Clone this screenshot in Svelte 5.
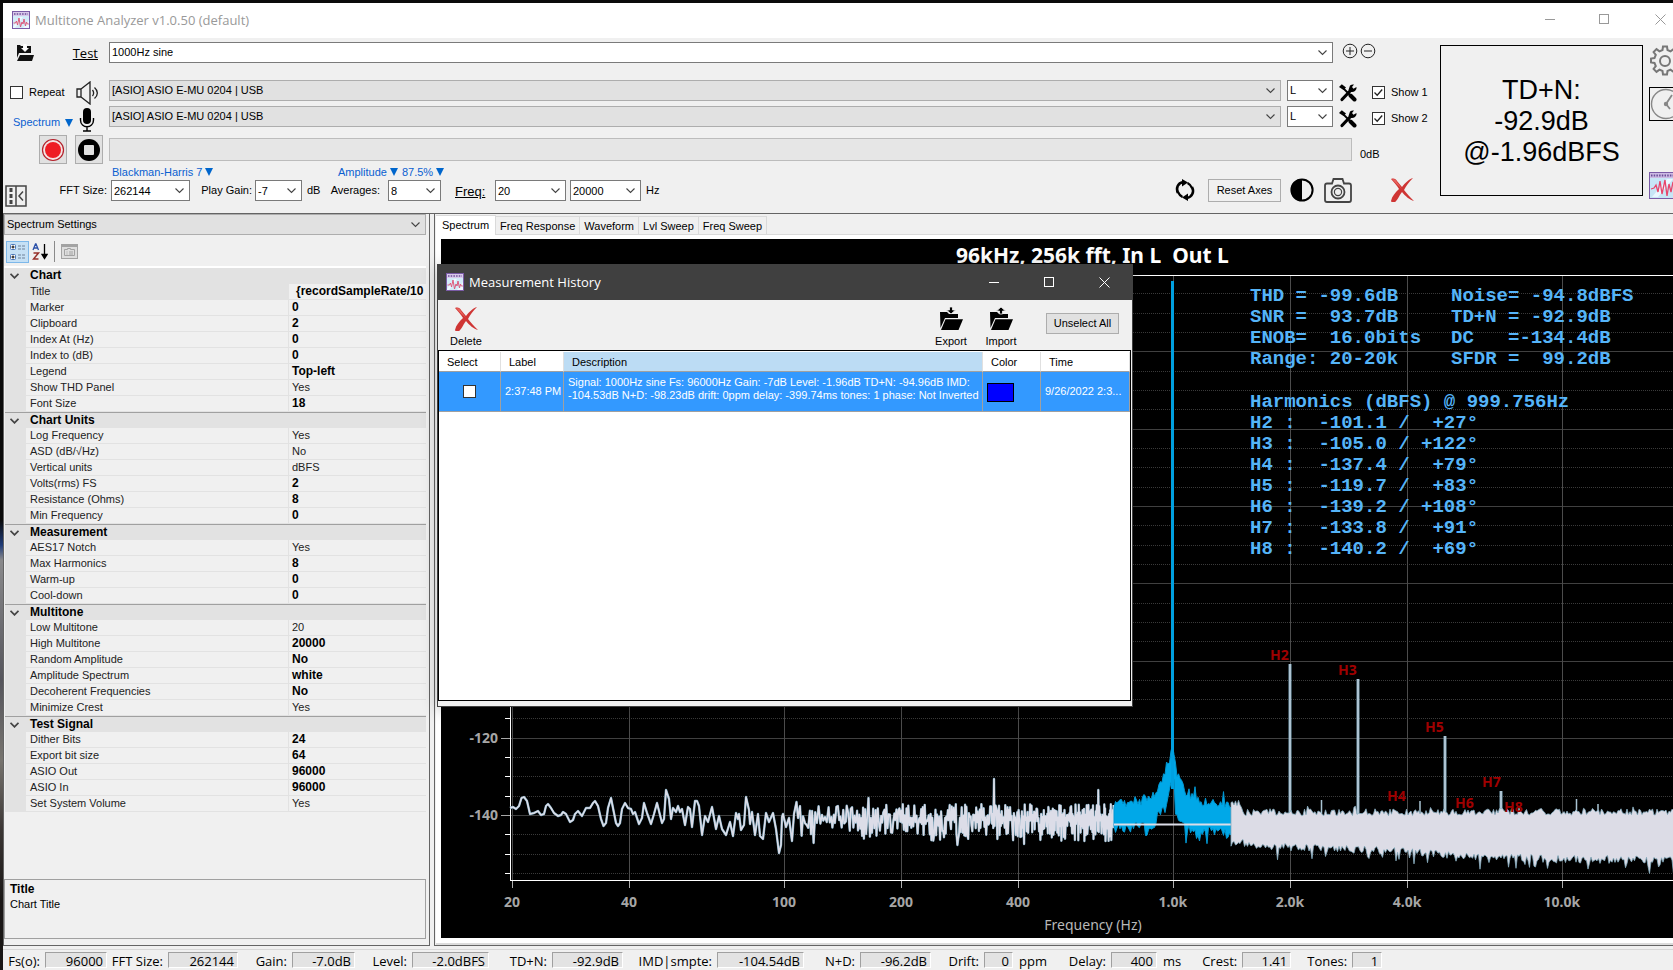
<script>
  const groups = [
    { name: 'Chart', rows: [['Title', '{recordSampleRate/10', 1], ['Marker', '0', 1], ['Clipboard', '2', 1], ['Index At (Hz)', '0', 1], ['Index to (dB)', '0', 1], ['Legend', 'Top-left', 1], ['Show THD Panel', 'Yes', 0], ['Font Size', '18', 1]] },
    { name: 'Chart Units', rows: [['Log Frequency', 'Yes', 0], ['ASD (dB/√Hz)', 'No', 0], ['Vertical units', 'dBFS', 0], ['Volts(rms) FS', '2', 1], ['Resistance (Ohms)', '8', 1], ['Min Frequency', '0', 1]] },
    { name: 'Measurement', rows: [['AES17 Notch', 'Yes', 0], ['Max Harmonics', '8', 1], ['Warm-up', '0', 1], ['Cool-down', '0', 1]] },
    { name: 'Multitone', rows: [['Low Multitone', '20', 0], ['High Multitone', '20000', 1], ['Random Amplitude', 'No', 1], ['Amplitude Spectrum', 'white', 1], ['Decoherent Frequencies', 'No', 1], ['Minimize Crest', 'Yes', 0]] },
    { name: 'Test Signal', rows: [['Dither Bits', '24', 1], ['Export bit size', '64', 1], ['ASIO Out', '96000', 1], ['ASIO In', '96000', 1], ['Set System Volume', 'Yes', 0]] }
  ];
  const tabs = ['Spectrum', 'Freq Response', 'Waveform', 'Lvl Sweep', 'Freq Sweep'];
  let activeTab = $state('Spectrum');

  // label, value, unit, width of the label cell, width of the value box
  const meters = [
    ['Fs(o):', '96000', '', 42, 62], ['FFT Size:', '262144', '', 61, 70], ['Gain:', '-7.0dB', '', 54, 63],
    ['Level:', '-2.0dBFS', '', 57, 77], ['TD+N:', '-92.9dB', '', 63, 71], ['IMD|smpte:', '-104.54dB', '', 94, 87],
    ['N+D:', '-96.2dB', '', 56, 71], ['Drift:', '0', 'ppm', 53, 29], ['Delay:', '400', 'ms', 64, 46],
    ['Crest:', '1.41', '', 61, 49], ['Tones:', '1', '', 61, 30]
  ];

  const summary = [
    ['THD = -99.6dB', 'Noise= -94.8dBFS'],
    ['SNR =  93.7dB', 'TD+N = -92.9dB'],
    ['ENOB=  16.0bits', 'DC   =-134.4dB'],
    ['Range: 20-20k', 'SFDR =  99.2dB']
  ];
  const harmonicList = [
    'Harmonics (dBFS) @ 999.756Hz',
    'H2 :  -101.1 /  +27°',
    'H3 :  -105.0 / +122°',
    'H4 :  -137.4 /  +79°',
    'H5 :  -119.7 /  +83°',
    'H6 :  -139.2 / +108°',
    'H7 :  -133.8 /  +91°',
    'H8 :  -140.2 /  +69°'
  ];

  // Chart scales: log frequency across, dBFS down.
  const fx = (f) => 71 + 389 * Math.log10(f / 20);
  const dy = (db) => 35 - db * 3.865;
  const freqTicks = [[20, '20'], [40, '40'], [100, '100'], [200, '200'], [400, '400'], [1000, '1.0k'], [2000, '2.0k'], [4000, '4.0k'], [10000, '10.0k']];
  const dbLines = [];
  for (let db = -5; db >= -155; db -= 5) dbLines.push(db);

  const harmonics = [
    ['H2', 829, 421, 849, 425], ['H3', 897, 436, 917, 440], ['H5', 984, 493, 1004, 497], ['H7', 1041, 548, 1060, 552]
  ];
  const smallHarmonics = [['H4', 946, 562], ['H6', 1014, 569], ['H8', 1063, 573]];

  let seed = 20220926;
  function rnd() {
    seed = (seed * 1664525 + 1013904223) % 4294967296;
    return seed / 4294967296;
  }

  const low = [[69, 569], [72, 568], [75, 570], [78, 567], [80.5, 559], [83, 558], [86, 562], [89, 575], [93, 574], [97, 572], [100, 576], [103, 575], [105, 567], [107, 565], [110, 569], [113, 574], [117, 577], [120, 576], [122, 573], [125, 575], [129, 583], [132, 581], [134, 575], [137, 572], [141, 577], [145, 569], [149, 569], [152, 564], [154, 562], [157, 567], [160, 580], [162.5, 587], [165, 584], [167, 569], [170, 559], [172, 569], [175, 584], [177, 587], [179, 584], [181, 570], [184, 564], [187, 569], [190, 570], [192, 575], [194, 573], [198, 585], [201, 579], [203, 564], [206, 574], [210, 585], [213, 575], [216, 564], [218, 572], [221, 584], [223, 580], [225, 551], [228, 560], [230, 580], [232, 569], [235, 573], [237, 567], [239, 573], [241, 570], [244, 586], [247, 568], [249, 570], [251, 588], [254, 562], [256, 562], [258, 567], [261, 596], [264, 577], [267, 583], [271, 568], [275, 590], [278, 577], [281, 590], [285, 596], [289, 583], [292, 597], [295, 574], [297, 580], [298, 575], [300, 591], [303, 586], [305, 558], [308, 571], [309, 585], [311, 573], [314, 596], [317, 575], [319, 597], [322, 600], [325, 574], [328, 583], [332, 574], [335, 590], [338, 614], [340, 606], [341, 578], [342, 575], [345, 588], [348, 579], [351, 602], [353, 575], [355.5, 563], [357, 579]];

  function midTrace() {
    const pts = [];
    const peaks = [[373, 604], [428, 559], [554, 540], [658, 551], [517, 606], [584, 605]];
    let x = 359, up = true;
    while (x < 673) {
      const t = (x - 359) / 314;
      const reach = up ? 14 : 20 + 2 * t;
      let y = 580 + (up ? -1 : 1) * (1 + Math.pow(rnd(), 1.6 - 0.4 * t) * reach);
      const i = peaks.findIndex((p) => Math.abs(p[0] - x) < 1);
      if (i >= 0) y = peaks.splice(i, 1)[0][1];
      pts.push([x, y]);
      x += (1.9 - 1.4 * Math.sqrt(t)) * (0.6 + 0.6 * rnd());
      if (rnd() < 0.84) up = !up;
    }
    return pts;
  }

  const toPath = (pts) => 'M' + pts.map((p) => p[0].toFixed(1) + ' ' + p[1].toFixed(1)).join('L');

  function lerp(table, x) {
    for (let i = 1; i < table.length; i++) {
      const [x0, y0] = table[i - 1];
      const [x1, y1] = table[i];
      if (x <= x1) return y0 + ((y1 - y0) * (x - x0)) / (x1 - x0);
    }
    return table[table.length - 1][1];
  }

  // Filled noise band between two jagged edges.
  function band(x0, x1, top, bottom, ja, jb) {
    const a = [];
    const b = [];
    for (let x = x0; x <= x1; x += 1.5) {
      const sa = rnd() < 0.08 ? ja : 0;
      const sb = rnd() < 0.14 ? jb : 0;
      a.push([x, lerp(top, x) - rnd() * ja - sa * rnd()]);
      b.push([x, lerp(bottom, x) + rnd() * jb + sb * rnd() * 1.6]);
    }
    return toPath(a.concat(b.reverse())) + 'Z';
  }

  const noiseTop = [[790, 567], [798, 568], [803, 577], [1231, 576], [2400, 576]];
  const noiseBottom = [[790, 598], [830, 604], [950, 608], [1010, 612], [1110, 616], [1231, 617], [2400, 620]];
  const whiteLow = toPath(low.concat(midTrace()));
  const whiteHigh = band(790, 2400, noiseTop, noiseBottom, 7, 8);
  const tone = band(673, 790,
    [[673, 571], [700, 567], [713, 560], [720, 551], [724, 538], [729, 526], [731, 506], [733, 522], [736, 538], [740, 548], [745, 558], [760, 567], [790, 572]],
    [[673, 585], [712, 582], [717, 572], [726, 563], [729, 540], [733, 540], [736, 564], [742, 578], [750, 586], [790, 590]], 10, 10);
</script>

{#snippet appIcon(size)}
  <svg width={size} height={size} viewBox="0 0 18 18" aria-hidden="true">
    <rect x=".5" y=".5" width="17" height="17" fill="#d3ecf8" stroke="#7a5ba6" />
    <rect x="1" y="1" width="16" height="4" fill="#d9c9ea" />
    <path d="M2 3h14" stroke="#6b4f97" stroke-width="1.4" stroke-dasharray="1.5 1.2" />
    <path d="M11 17l6-8v8zM1 16l7-10h3l-8 11H1z" fill="#eff9ff" />
    <path d="M1.500 12h2l1-2 1 4 1.500-7 1.500 9 1.500-5 1 2 1-5 1.500 7 1-4 .8 2h1.500" fill="none" stroke="#dc5a7c" />
  </svg>
{/snippet}

{#snippet redX()}
  <svg width="24" height="24" viewBox="0 0 24 24" aria-hidden="true">
    <path d="M1 1c3-1 5 0 6 2l5 6c3-4 7-8 11-9-4 4-7 8-9 12 3 4 6 7 10 11-4-1-9-5-12-9-3 4-5 9-7 10-2 1-4 0-4-1 1-5 4-8 8-12C7 8 4 4 1 1z" fill="#cf3534" />
    <path d="M2 1c3 0 4 1 5 3l5 7c-3-3-7-6-10-10z" fill="#e8645e" />
  </svg>
{/snippet}

{#snippet tools()}
  <svg width="18" height="18" viewBox="0 0 18 18" aria-hidden="true">
    <path d="M3 15.500L12 6" stroke="#000" stroke-width="3.200" stroke-linecap="round" />
    <path d="M11 1.500q2-1.500 4-1l-2 2.500 1.500 1.800 3-1.800q.5 2.500-1.500 4t-4.500.8L9.500 6z" />
    <path d="M4.500 4.500l7 7" fill="none" stroke="#000" stroke-width="1.800" />
    <path d="M0 3L2.800.3 7 3.500 4.500 6z" />
    <path d="M11.500 11.500l4 4" stroke="#000" stroke-width="4" stroke-linecap="round" />
  </svg>
{/snippet}

{#snippet folder(dir)}
  <svg width="24" height="24" viewBox="0 0 24 24" aria-hidden="true">
    <path d="M1 5h7l2 2h9v4H6L1.500 21z" />
    <path d="M6.500 12.300H24L19.500 23H2z" />
    {#if dir === 'out'}<path d="M10.500 0h3v3h3L12 7 7.500 3h3z" stroke="#f0f0f0" stroke-width=".8" />
    {:else}<path d="M10.500 7h3V4h3L12 0 7.500 4h3z" stroke="#f0f0f0" stroke-width=".8" />{/if}
  </svg>
{/snippet}

{#snippet captionButtons()}
  <button aria-label="Minimize"><svg width="11" height="11"><path d="M0 5.500h10" stroke="currentColor" /></svg></button>
  <button aria-label="Maximize"><svg width="11" height="11"><rect x=".5" y=".5" width="9" height="9" fill="none" stroke="currentColor" /></svg></button>
  <button class="close" aria-label="Close"><svg width="11" height="11"><path d="M.5 .5l10 10M10.500 .5l-10 10" stroke="currentColor" /></svg></button>
{/snippet}

<div class="desktop">
  <div class="window">
    <header class="caption">
      {@render appIcon(18)}
      <h1>Multitone Analyzer v1.0.50 (default)</h1>
      <div class="buttons">{@render captionButtons()}</div>
    </header>

    <section class="controls">
      <div class="rows">
        <div class="row first">
          <div class="lead">
            <button class="icon" aria-label="Load test">
              <svg width="18" height="18" viewBox="0 0 18 18" fill="#111"><path d="M1 1h3l1 1h2v2H5l4 4 4-4h-2V2h4v7H3L1 14z" /><path d="M7.500 0h3v4H12L9 7 6 4h1.500z" fill="#fff" /><path d="M4 11h14l-2 6H1z" /></svg>
            </button>
            <a class="test" href="#test">Test</a>
          </div>
          <select class="grow" aria-label="Test"><option>1000Hz sine</option></select>
          <div class="tail pm">
            <button class="icon" aria-label="Add"><svg width="16" height="16" viewBox="0 0 16 16" fill="none" stroke="#222"><circle cx="8" cy="8" r="6.800" /><path d="M4 8h8M8 4v8" /></svg></button>
            <button class="icon" aria-label="Remove"><svg width="16" height="16" viewBox="0 0 16 16" fill="none" stroke="#222"><circle cx="8" cy="8" r="6.800" /><path d="M4 8h8" /></svg></button>
          </div>
        </div>

        <div class="row second">
          <div class="lead">
            <label><input type="checkbox" />Repeat</label>
            <svg class="spk" width="24" height="24" viewBox="0 0 24 24" fill="none" stroke="#222" stroke-width="1.300"><path d="M1 8h4v8H1zM5 8l9-7v22l-9-7" /><path d="M16.500 9c1.500 2 1.500 4 0 6M18.500 6.500c3.800 3.500 3.800 7.500 0 11" /></svg>
          </div>
          <select class="grow gray" aria-label="Output device"><option>[ASIO] ASIO E-MU 0204 | USB</option></select>
          <select class="chan" aria-label="Output channel"><option>L</option></select>
          <div class="tail">
            <button class="icon" aria-label="Output setup">{@render tools()}</button>
            <label><input type="checkbox" checked />Show 1</label>
          </div>
        </div>

        <div class="row third">
          <div class="lead">
            <a class="link low" href="#mode">Spectrum <i></i></a>
            <svg class="mic" width="16" height="24" viewBox="0 0 16 24"><rect x="4" y="0" width="8" height="16" rx="4" /><path d="M1.500 10v2c0 9 13 9 13 0v-2M8 18.500V23M4 23h8" fill="none" stroke="#000" stroke-width="1.400" /></svg>
          </div>
          <select class="grow gray" aria-label="Input device"><option>[ASIO] ASIO E-MU 0204 | USB</option></select>
          <select class="chan" aria-label="Input channel"><option>L</option></select>
          <div class="tail">
            <button class="icon" aria-label="Input setup">{@render tools()}</button>
            <label><input type="checkbox" checked />Show 2</label>
          </div>
        </div>

        <div class="row fourth">
          <div class="lead">
            <button class="push" aria-label="Record"><svg width="24" height="24" viewBox="0 0 24 24"><circle cx="12" cy="12" r="10.500" fill="#f4e4e4" stroke="#b3202a" stroke-width="1.200" /><circle cx="12" cy="12" r="8" fill="#ee1c24" /></svg></button>
            <button class="push" aria-label="Stop"><svg width="24" height="24" viewBox="0 0 24 24"><circle cx="12" cy="12" r="11" /><rect x="7" y="7" width="10" height="10" rx="1" fill="#e1e1e1" /></svg></button>
          </div>
          <div class="level" role="meter" aria-label="Level" aria-valuenow="0"></div>
          <span class="zero">0dB</span>
        </div>

        <div class="row links">
          <a class="link window-fn" href="#window">Blackman-Harris 7<i></i></a>
          <a class="link" href="#amplitude">Amplitude <i></i></a>
          <a class="link" href="#overlap">87.5%<i></i></a>
        </div>

        <div class="row last">
          <button class="icon toggle" aria-label="Collapse panel">
            <svg width="22" height="22" viewBox="0 0 22 22" fill="none" stroke="#444" stroke-width="1.500"><path d="M1 1h20v20H1zM11 1v20M18 6.500L14 11l4 4.500" /><path d="M6 3v16" stroke-width="3" stroke-dasharray="4 2" /></svg>
          </button>
          <label class="c1" for="fft">FFT Size:</label>
          <select id="fft" class="w79"><option>262144</option></select>
          <label class="c2" for="gain">Play Gain:</label>
          <select id="gain" class="w47"><option>-7</option></select>
          <span class="unit">dB</span>
          <label class="c3" for="avg">Averages:</label>
          <select id="avg" class="w53"><option>8</option></select>
          <a class="freq" href="#freq">Freq:</a>
          <select class="w71" aria-label="Lowest frequency"><option>20</option></select>
          <select class="w71 next" aria-label="Highest frequency"><option>20000</option></select>
          <span class="unit">Hz</span>
          <div class="actions">
            <button class="icon" aria-label="Refresh"><svg width="22" height="22" viewBox="0 0 22 22"><path d="M9 3C4 4 1.500 9 4 14M13 19c5-1 7.500-6 5-11" fill="none" stroke="#000" stroke-width="2.600" /><path d="M8 0l6 3.500-6 4zM14 22l-6-3.500 6-4z" /><path d="M4 13q1.500 3.500 4.500 5M18 9q-1.500-3.500-4.500-5" fill="none" stroke="#000" stroke-width="2.200" /></svg></button>
            <button class="push reset">Reset Axes</button>
            <button class="icon" aria-label="Contrast"><svg width="24" height="24" viewBox="0 0 24 24"><circle cx="12" cy="12" r="10.600" fill="#f0f0f0" stroke="#000" stroke-width="2" /><path d="M12 1a11 11 0 0 0 0 22z" /></svg></button>
            <button class="icon cam" aria-label="Snapshot"><svg width="28" height="25" viewBox="0 0 28 25" fill="none" stroke="#444" stroke-width="1.800"><path d="M3 5.500h5L9.500 1h9L20 5.500h5q2 0 2 2V22q0 2-2 2H3q-2 0-2-2V7.500q0-2 2-2z" /><circle cx="14" cy="14" r="6.500" /><circle cx="14" cy="14" r="3.600" stroke-width="1.200" /></svg></button>
            <button class="icon del" aria-label="Clear">{@render redX()}</button>
          </div>
        </div>
      </div>

      <output class="bigread">TD+N:<br />-92.9dB<br />@-1.96dBFS</output>

      <nav class="side">
        <button class="icon" aria-label="Settings"><svg width="32" height="32" viewBox="0 0 32 32" fill="none" stroke="#777" stroke-width="2"><circle cx="16" cy="16" r="5" /><path d="M13.500 5l.5-3.500h4l.5 3.500 3 1.300 3-2.200 2.900 2.900-2.200 3 1.300 3 3.500.5v4l-3.500.5-1.300 3 2.200 3-2.900 2.900-3-2.200-3 1.300-.5 3.500h-4l-.5-3.500-3-1.300-3 2.200-2.900-2.900 2.200-3-1.300-3-3.500-.5v-4l3.500-.5 1.300-3-2.200-3 2.900-2.900 3 2.200z" /></svg></button>
        <button class="icon clock" aria-label="History"><svg width="32" height="32" viewBox="0 0 32 32" fill="none" stroke="#888" stroke-width="1.400"><circle cx="16" cy="16" r="14.500" /><path d="M22 7l-6 9 4 5" stroke-width="1.800" /><circle cx="16" cy="16" r="1.500" fill="#888" /></svg></button>
        <button class="icon wave" aria-label="Generator">
          <svg width="36" height="27" viewBox="0 0 36 27"><rect x=".5" y=".5" width="35" height="26" fill="#c7e6f6" stroke="#7a5ba6" /><rect x="1" y="1" width="34" height="5" fill="#cdbbe4" /><path d="M2 3.500h30" stroke="#6b4f97" stroke-width="2" stroke-dasharray="1.500 1.200" /><path d="M3 25L18 7h6L9 25z" fill="#eaf7ff" /><path d="M2 17l3-1 2-3 2 7 2-11 2 13 3-14 2 16 2-12 2 8 2-10 2 10 2-4 3 1" fill="none" stroke="#e8456b" stroke-width="1.300" /></svg>
        </button>
      </nav>
    </section>

    <main class="work">
      <aside class="props">
        <select class="panel-pick gray" aria-label="Settings page"><option>Spectrum Settings</option></select>
        <div class="ptools">
          <button class="cat" aria-label="Categorized"><svg width="18" height="18" viewBox="0 0 18 18"><path d="M9 3h8M9 6h8M9 12h8M9 15h8" stroke="#6e8199" stroke-dasharray="3 1" /><rect x="1.500" y="1.500" width="5" height="5" rx="1" fill="#fff" stroke="#4a76b8" /><rect x="1.500" y="11.500" width="5" height="5" rx="1" fill="#fff" stroke="#4a76b8" /><path d="M2.500 4h3M4 2.500v3M2.500 14h3M4 12.500v3" stroke="#000" /></svg></button>
          <button class="icon" aria-label="Alphabetical"><svg width="16" height="18" viewBox="0 0 16 18" fill="none"><path d="M1 7l2.500-6h.5L6.500 7M2 5h4" stroke="#2b50a8" stroke-width="1.300" /><path d="M1.500 10h5l-5 6h5" stroke="#96302a" stroke-width="1.500" /><path d="M12.500 1v13M10 11.500l2.500 4 2.500-4z" stroke="#000" stroke-width="1.300" fill="#000" /></svg></button>
          <span class="bar"></span>
          <button class="icon" aria-label="Property pages" disabled><svg width="17" height="15" viewBox="0 0 17 15" fill="none" stroke="#a3a3a3"><rect x=".5" y=".5" width="16" height="14" fill="#dedede" /><path d="M1 2h15" stroke-width="2" /><path d="M3.500 5.500h3v-1h3v1h4v6h-10zM5.500 8h1M8 8h4M5.500 10h1M8 10h4" /></svg></button>
        </div>
        <table class="grid">
          <colgroup><col class="gut" /><col class="nam" /><col /></colgroup>
          {#each groups as g}
            <tbody>
              <tr class="group"><td><button aria-label="Collapse {g.name}"><svg width="9" height="6"><path d="M.5 .8l4 4 4-4" fill="none" stroke="#444" stroke-width="1.800" /></svg></button></td><th colspan="2">{g.name}</th></tr>
              {#each g.rows as [name, value, strong]}
                <tr class:selected={name === 'Title'}><td></td><td>{name}</td><td class:strong={strong === 1}>{value}</td></tr>
              {/each}
            </tbody>
          {/each}
        </table>
        <div class="help"><b>Title</b><p>Chart Title</p></div>
      </aside>

      <section class="view">
        <div class="tabs" role="tablist">
          {#each tabs as t}
            <button role="tab" aria-selected={activeTab === t} class:active={activeTab === t} onclick={() => (activeTab = t)}>{t}</button>
          {/each}
        </div>
        <div class="page">
          <svg class="chart" aria-label="Spectrum chart">
            <text class="title" x="515" y="24" xml:space="preserve">96kHz, 256k fft, In L  Out L</text>
            {#each dbLines as db}
              {#if db % 20 === 0}
                <line x1="60" x2="100%" y1={Math.round(dy(db)) + 0.5} y2={Math.round(dy(db)) + 0.5} stroke="#404040" />
                <line x1="60" x2="69" y1={Math.round(dy(db)) + 0.5} y2={Math.round(dy(db)) + 0.5} stroke="#a8a8a8" />
                <text class="tick end" x="57" y={dy(db) + 5}>{db}</text>
              {:else}
                <line x1="72" x2="100%" y1={Math.round(dy(db)) + 0.5} y2={Math.round(dy(db)) + 0.5} stroke="#3a3a3a" stroke-dasharray="1 1" />
                <line x1="64" x2="69" y1={Math.round(dy(db)) + 0.5} y2={Math.round(dy(db)) + 0.5} stroke="#fff" />
              {/if}
            {/each}
            {#each freqTicks as [f, label]}
              <line x1={Math.round(fx(f)) + 0.5} x2={Math.round(fx(f)) + 0.5} y1="36" y2="641" stroke="#4c4c4c" />
              <line x1={Math.round(fx(f)) + 0.5} x2={Math.round(fx(f)) + 0.5} y1="641" y2="649" stroke="#b0b0b0" />
              <text class="tick mid" x={fx(f)} y="668">{label}</text>
            {/each}
            <path d="M69.500 36.500V641.500M69 36.500H2400M69 641.500H2400" stroke="#fff" fill="none" />
            <path d={whiteLow} fill="none" stroke="#6f9db4" stroke-width="2.400" stroke-linejoin="round" />
            <path d={whiteLow} fill="none" stroke="#dcdde8" stroke-width="1.600" stroke-linejoin="round" />
            <path d={tone} fill="#00a8e8" stroke="#0098d4" />
            <path d="M731.500 42V550" stroke="#00a0e0" stroke-width="3" />
            <path d="M673 585.500H790" stroke="#dcdde8" stroke-width="2" />
            {#each harmonics as [label, lx, ly, x, y]}
              <path d="M{x} {y}V590" stroke="#7fa9bd" stroke-width="3" />
              <path d="M{x} {y}V590" stroke="#dcdde8" stroke-width="1" />
              <text class="harm" x={lx} y={ly}>{label}</text>
            {/each}
            <path d="M880.500 561V590M979 562V590M1135.500 560V590M1157 565V590" stroke="#a9c3d2" stroke-width="1.500" />
            <path d={whiteHigh} fill="#dcdce6" stroke="#86adc0" stroke-width=".8" />
            {#each smallHarmonics as [label, x, y]}<text class="harm" {x} {y}>{label}</text>{/each}
            <text class="axis" x="652" y="691">Frequency (Hz)</text>
            <g class="numbers">
              {#each summary as [left, right], i}
                <text x="809" y={62 + i * 21} xml:space="preserve">{left}</text>
                <text x="1010" y={62 + i * 21} xml:space="preserve">{right}</text>
              {/each}
              {#each harmonicList as line, i}<text x="809" y={168 + i * 21} xml:space="preserve">{line}</text>{/each}
            </g>
          </svg>
        </div>
      </section>

      <section class="dialog" role="dialog" aria-label="Measurement History">
        <header>
          {@render appIcon(18)}
          <h2>Measurement History</h2>
          <div class="buttons">{@render captionButtons()}</div>
        </header>
        <div class="dtools">
          <button class="stack">{@render redX()}<span>Delete</span></button>
          <span class="fill"></span>
          <button class="stack">{@render folder('out')}<span>Export</span></button>
          <button class="stack">{@render folder('in')}<span>Import</span></button>
          <button class="push unsel">Unselect All</button>
        </div>
        <div class="list">
          <table>
            <colgroup><col class="k1" /><col class="k2" /><col /><col class="k4" /><col class="k5" /></colgroup>
            <thead><tr><th>Select</th><th>Label</th><th class="sorted">Description</th><th>Color</th><th>Time</th></tr></thead>
            <tbody>
              <tr>
                <td class="ctr"><input type="checkbox" aria-label="Select measurement" /></td>
                <td class="tight">2:37:48 PM</td>
                <td class="desc">Signal: 1000Hz sine Fs: 96000Hz Gain: -7dB Level: -1.96dB TD+N: -94.96dB IMD:<br />-104.53dB N+D: -98.23dB drift: 0ppm delay: -399.74ms tones: 1 phase: Not Inverted</td>
                <td><span class="swatch"></span></td>
                <td class="tight">9/26/2022 2:3...</td>
              </tr>
            </tbody>
          </table>
        </div>
      </section>
    </main>

    <footer class="status">
      {#each meters as [label, value, unit, lw, bw]}
        <span class="lab" style="width:{lw}px">{label}</span><span class="box" style="width:{bw}px">{value}</span>{#if unit}<span class="after">{unit}</span>{/if}
      {/each}
    </footer>
  </div>
</div>

<style>
  :global(body) { margin: 0; }
  .desktop {
    height: 100vh; overflow: hidden; box-sizing: border-box; padding: 3px 0 0 3px;
    background: linear-gradient(#0a0a0a 0 520px, #1f3b78 545px, #8a8a8c 560px, #55555c 680px, #77746f 760px, #3b3634 830px, #1a1716 900px);
    font: 11px/13px "Liberation Sans", Arial, sans-serif; color: #000;
  }
  .desktop * { box-sizing: border-box; }
  .window { height: 100%; display: flex; flex-direction: column; background: #f0f0f0; overflow: hidden; }
  button { font: inherit; color: inherit; padding: 0; border: 0; background: none; margin: 0; }
  svg { display: block; flex: none; }
  h1, h2, p { margin: 0; font-weight: 400; }

  .caption { display: flex; align-items: center; height: 35px; background: #fff; padding: 0 0 2px 9px; color: #999; flex: none; }
  .caption h1 { font: 13px/20px "Open Sans", "Noto Sans", sans-serif; margin-left: 5px; }
  .buttons { margin-left: auto; display: flex; align-self: stretch; }
  .buttons button { width: 54px; display: grid; place-items: center; }
  .caption .close { width: 42px; padding-left: 16px; }

  .controls { display: flex; flex: none; height: 176px; border-bottom: 1px solid #646464; }
  .rows { flex: 1; min-width: 0; padding-top: 4px; display: flex; flex-direction: column; }
  .row { display: flex; align-items: flex-start; flex: none; height: 21px; }
  .lead { width: 106px; flex: none; display: flex; align-items: center; height: 100%; }
  .first { margin-bottom: 17px; }
  .second { margin-bottom: 5px; }
  .third { margin-bottom: 8px; }
  .first .lead { padding-left: 13px; }
  .test { margin-left: auto; margin-right: 11px; font: 13px/16px "Open Sans", "Noto Sans", sans-serif; color: #000; }
  label { display: flex; align-items: center; }
  .lead label { padding-left: 7px; height: 24px; margin-top: 4px; }
  .spk { margin-left: auto; margin-right: 9px; margin-top: 4px; }
  .mic { margin-left: auto; margin-right: 14px; margin-top: 6px; }
  .low { margin: 12px 0 0 10px; }
  .lead label, .tail label { white-space: nowrap; }

  input[type="checkbox"] { appearance: none; width: 13px; height: 13px; border: 1px solid #333; background: #fff center no-repeat; margin: 0 6px 0 0; flex: none; }
  input:checked { background-image: url("data:image/svg+xml,%3Csvg xmlns='http://www.w3.org/2000/svg' width='11' height='11'%3E%3Cpath d='M1.500 5.500l2.700 2.700 5-5.700' fill='none' stroke='%23222' stroke-width='1.300'/%3E%3C/svg%3E"); }
  select {
    appearance: none; height: 21px; border: 1px solid #7a7a7a; border-radius: 0; color: #000; font: inherit; margin: 0; padding: 0 18px 0 2px; min-width: 0;
    background: #fff url("data:image/svg+xml,%3Csvg xmlns='http://www.w3.org/2000/svg' width='9' height='6'%3E%3Cpath d='M.5 .5l4 4 4-4' fill='none' stroke='%23444' stroke-width='1.100'/%3E%3C/svg%3E") no-repeat right 5px center;
  }
  select.gray { background-color: #e1e1e1; border-color: #adadad; }
  .grow { flex: 1; }
  .chan { width: 46px; margin-left: 6px; }
  .tail { width: 107px; flex: none; display: flex; align-items: center; height: 25px; padding-left: 6px; }
  .tail label { margin-left: 15px; }
  .pm { padding-left: 9px; gap: 2px; height: 18px; }

  .link { color: #0a5fd0; text-decoration: none; display: flex; align-items: center; gap: 3px; }
  .link i { border: 4px solid transparent; border-top: 8px solid #0066cc; border-bottom: 0; width: 0; height: 0; }
  .low { gap: 5px; }
  .fourth { height: 29px; }
  .fourth .lead { padding-left: 36px; gap: 8px; }
  .push { border: 1px solid #adadad; background: #e1e1e1; display: grid; place-items: center; }
  .fourth .push { width: 28px; height: 29px; }
  .level { flex: 1; height: 23px; margin-top: 3px; border: 1px solid #bcbcbc; background: #e6e6e6; }
  .zero { width: 88px; padding: 13px 0 0 8px; }
  .links { height: 16px; align-items: center; padding-left: 109px; gap: 4px; }
  .window-fn { width: 222px; }
  .last { line-height: 21px; height: 27px; padding-left: 2px; }
  .toggle { align-self: flex-end; }
  .c1 { width: 84px; justify-content: flex-end; padding-right: 4px; height: 21px; }
  .c2 { width: 65px; justify-content: flex-end; padding-right: 3px; height: 21px; }
  .c3 { width: 66px; justify-content: flex-end; padding-right: 8px; height: 21px; }
  .w79 { width: 79px; } .w47 { width: 47px; } .w53 { width: 53px; } .w71 { width: 71px; }
  .next { margin-left: 4px; }
  .unit { width: 20px; padding-left: 5px; }
  .freq { width: 54px; padding-left: 14px; color: #000; font-size: 13px; line-height: 24px; }
  .actions { margin-left: auto; display: flex; align-items: center; height: 20px; padding-right: 26px; }
  .reset { width: 73px; height: 23px; background: #f0f0f0; margin: 0 9px 0 12px; }
  .cam { margin-left: 10px; }
  .del { margin-left: 38px; }

  .bigread { width: 203px; flex: none; height: 151px; margin-top: 7px; padding-top: 2px; border: 1px solid #000; display: grid; place-content: center; text-align: center; font-size: 27px; line-height: 31px; }
  .side { width: 30px; flex: none; overflow: hidden; padding: 7px 0 0 6px; }
  .clock { border: 1px solid #000; display: block; margin: 7px 0 51px; }

  .work { flex: 1; min-height: 0; display: flex; gap: 4px; position: relative; }
  .props { width: 427px; flex: none; border: 1px solid #646464; border-top: 0; padding: 0 3px 6px 0; display: flex; flex-direction: column; background: #f0f0f0; }
  .panel-pick { width: 100%; flex: none; }
  .ptools { display: flex; align-items: center; height: 33px; padding: 2px 0 0 2px; flex: none; border-bottom: 2px solid #fff; }
  .cat { width: 23px; height: 22px; border: 1px solid #7db8ea; background: #c5e0f5; display: grid; place-items: center; margin-right: 3px; }
  .bar { width: 1px; height: 21px; background: #8a8a8a; margin: 0 6px; }
  .grid { border-collapse: separate; border-spacing: 0; table-layout: fixed; width: calc(100% - 1px); margin-left: 1px; }
  .gut { width: 21px; } .nam { width: 262px; }
  .grid tr { height: 16px; }
  .grid td, .grid th { padding: 0 0 0 4px; height: 16px; line-height: 15px; text-align: left; white-space: nowrap; overflow: hidden; border-bottom: 1px solid #e2e2e2; }
  .grid td { color: #222; }
  .grid td:first-child { background: #e2e2e2; padding: 0 0 0 5px; }
  .grid td:last-child { border-left: 1px solid #e2e2e2; padding-left: 3px; }
  .grid .group th { background: #e2e2e2; color: #000; font-size: 12px; }
  tbody + tbody .group > * { border-top: 1px solid #a0a0a0; border-bottom: 0; }
  .grid .strong { font-weight: 700; color: #000; font-size: 12px; }
  .grid .selected td:nth-child(2) { background: #e2e2e2; }
  .grid .selected td:last-child { padding-left: 7px; }
  .help { margin-top: auto; height: 60px; border: 1px solid #a0a0a0; padding: 2px 5px; line-height: 15px; flex: none; }
  .help b { font-size: 12px; }

  .view { flex: 1; min-width: 0; border: 1px solid #646464; border-top: 0; border-right: 0; display: flex; flex-direction: column; padding: 1px 0 0 1px; background: #f0f0f0; }
  .tabs { display: flex; align-items: flex-end; height: 20px; flex: none; border-bottom: 1px solid #dadada; background: #f0f0f0; }
  .tabs button { height: 18px; padding: 1px 4px 0; border: 1px solid #dadada; border-left: 0; border-bottom: 0; }
  .tabs .active { height: 20px; background: #fff; margin-bottom: -1px; padding: 0 6px; }
  .page { flex: 1; min-height: 0; background: #fff; padding: 4px 0 5px 5px; border-bottom: 2px solid #dcdcdc; }
  .chart { width: 100%; height: 100%; background: #000; font-family: "Noto Sans", "Open Sans", sans-serif; }
  .title { font-size: 21px; font-weight: 700; fill: #fff; white-space: pre; }
  .tick { font-size: 14px; font-weight: 700; fill: #a6a6a6; }
  .end { text-anchor: end; }
  .mid { text-anchor: middle; }
  .axis { font-size: 14px; fill: #b8b8b8; text-anchor: middle; }
  .harm { font-size: 14px; font-weight: 700; fill: #a00000; }
  .numbers text { font: 700 19px "Liberation Mono", "Courier New", monospace; fill: #55b4f8; white-space: pre; }

  .dialog { position: absolute; left: 434px; top: 50px; width: 696px; height: 443px; border: 1px solid #404040; background: #f0f0f0; display: flex; flex-direction: column; box-shadow: 0 2px 14px rgba(0, 0, 0, .25); }
  .dialog header { height: 35px; flex: none; background: #404040; color: #fff; display: flex; align-items: center; padding: 0 0 1px 8px; }
  .dialog h2 { font: 13px/20px "Open Sans", "Noto Sans", sans-serif; margin-left: 5px; }
  .dialog .buttons button { width: 55px; }
  .dtools { height: 50px; flex: none; display: flex; align-items: flex-start; padding: 7px 13px 0 3px; }
  .fill { flex: 1; }
  .stack { width: 50px; display: flex; flex-direction: column; align-items: center; gap: 3px; }
  .stack span { line-height: 14px; }
  .unsel { width: 73px; height: 21px; margin: 6px 0 0 20px; }
  .list { flex: 1; border: 1px solid #000; background: #fff; margin: 0 1px 5px 0; padding-top: 1px; }
  .list table { width: 100%; border-collapse: separate; border-spacing: 0; table-layout: fixed; }
  .k1 { width: 62px; } .k2 { width: 63px; } .k4 { width: 58px; } .k5 { width: 89px; }
  .list th { height: 20px; font-weight: 400; text-align: left; padding: 1px 0 0 8px; border-right: 1px solid #e0e0e0; border-bottom: 1px solid #a0a0a0; }
  .list .sorted { background: #bcdcf4; }
  .list td { height: 40px; background: #3399ff; color: #fff; padding: 0 0 0 4px; border-right: 1px solid #a0a0a0; border-bottom: 1px solid #a0a0a0; white-space: nowrap; overflow: hidden; }
  .list .ctr { text-align: center; padding: 0; }
  .list .ctr input { margin: 0; vertical-align: middle; }
  .list .desc { padding-bottom: 6px; }
  .swatch { display: block; width: 27px; height: 19px; border: 1px solid #000; background: #00f; margin-top: 2px; }

  .status { flex: none; display: flex; height: 21px; margin-top: 3px; border-top: 1px solid #d7d7d7; padding-top: 2px; font: 13px/18px "Open Sans", "Noto Sans", sans-serif; white-space: nowrap; }
  .status .lab { text-align: right; padding-right: 5px; flex: none; }
  .status .box { flex: none; height: 16px; background: #e3e3e3; border: 1px solid #a0a0a0; border-right-color: #fff; border-bottom-color: #fff; text-align: right; padding-right: 3px; line-height: 17px; }
  .status .after { padding-left: 6px; flex: none; }
</style>
